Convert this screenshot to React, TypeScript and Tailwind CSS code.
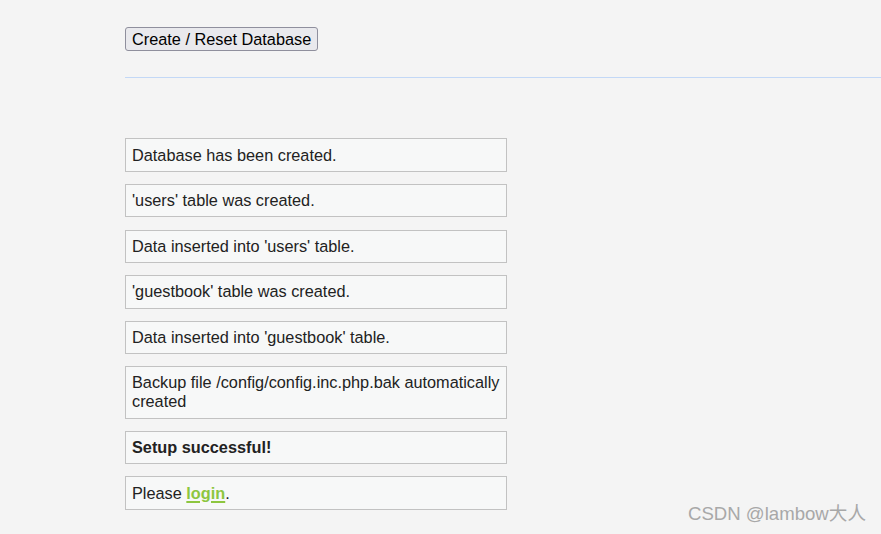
export default function App() {
  const messages: React.ReactNode[] = [
    "Database has been created.",
    "'users' table was created.",
    "Data inserted into 'users' table.",
    "'guestbook' table was created.",
    "Data inserted into 'guestbook' table.",
    "Backup file /config/config.inc.php.bak automatically created",
    <span className="font-bold">Setup successful!</span>,
    <>
      Please{" "}
      <a href="#" className="font-bold text-[#8dc63f] underline decoration-2 underline-offset-2">
        login
      </a>
      .
    </>,
  ];

  return (
    <div className="relative min-h-[534px] bg-[#f4f4f4] font-['Liberation_Sans',Arial,sans-serif] text-[16.3px] text-[#222]">
      <div className="pl-[125px] pt-[27px]">
        <button className="h-[24px] rounded-[3px] border border-[#8f8f9d] bg-[#e9e9ed] px-[6px] leading-[20px] text-black">
          Create / Reset Database
        </button>
        <div className="mt-[26px] h-px bg-[#c3d8f6]" />
        <div className="mt-[60px] flex w-[382px] flex-col gap-[12.2px]">
          {messages.map((m, i) => (
            <div
              key={i}
              className="border border-[#c2c2c2] bg-[#f7f8f8] px-[6px] py-[6.2px] leading-[19px]"
            >
              {m}
            </div>
          ))}
        </div>
      </div>
      <div className="absolute bottom-[6px] right-[15px] font-['Liberation_Sans','Noto_Sans_CJK_SC',sans-serif] text-[18.6px] text-[#a8a8a8]">
        CSDN @lambow大人
      </div>
    </div>
  );
}
